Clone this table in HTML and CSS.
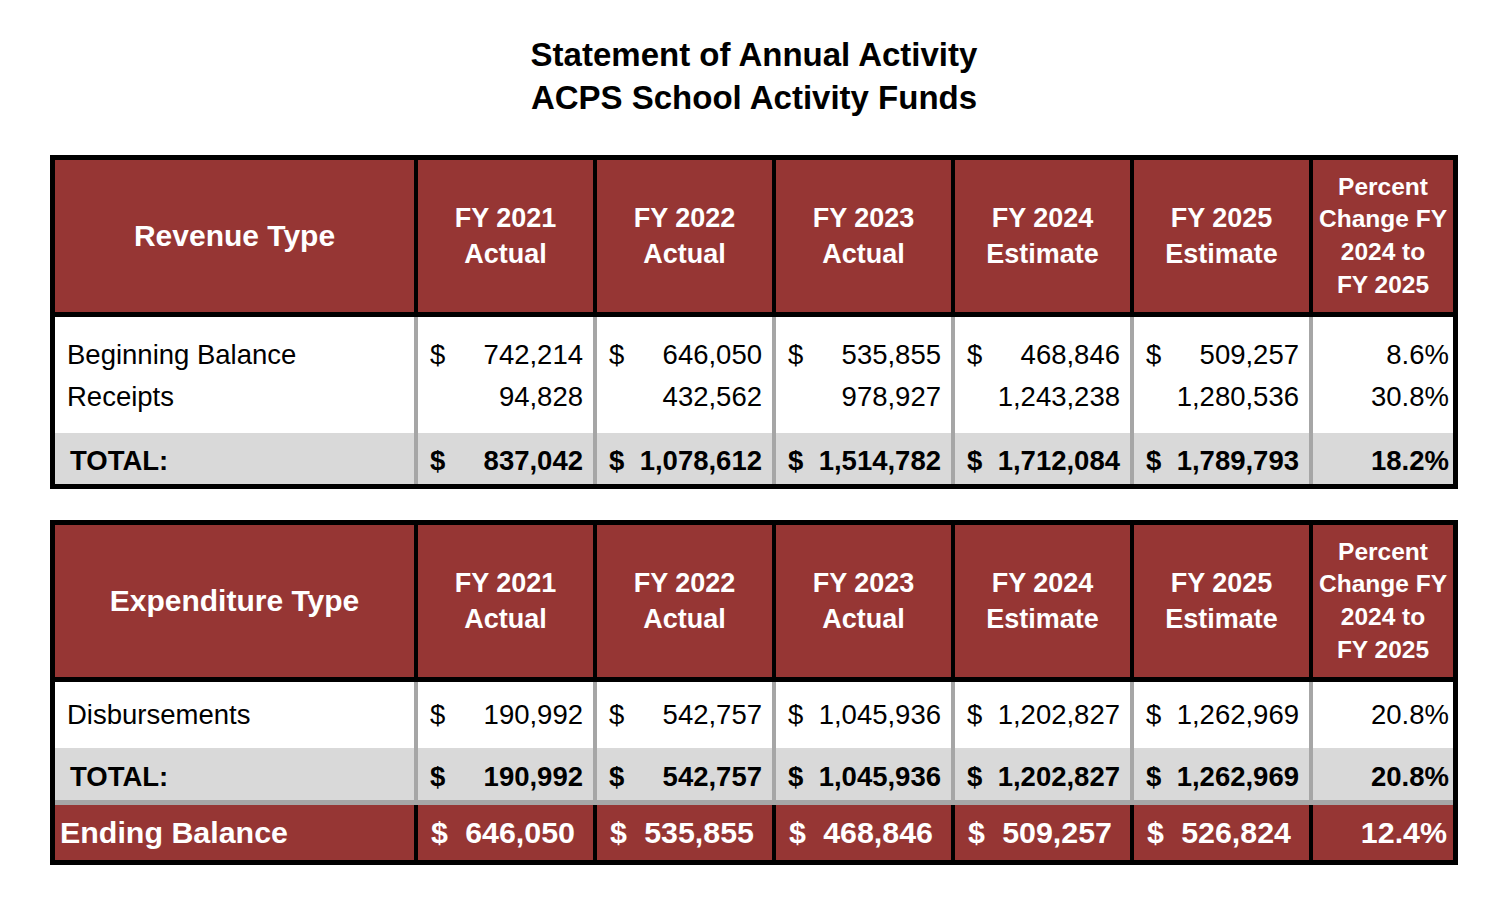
FILE: index.html
```html
<!DOCTYPE html>
<html lang="en">
<head>
<meta charset="utf-8">
<title>Statement of Annual Activity</title>
<link rel="stylesheet" href="styles.css">
</head>
<body>
<div class="page">
  <h1 class="title">Statement of Annual Activity<br>ACPS School Activity Funds</h1>

  <div class="tbl">
    <div class="grid head">
      <div class="h lbl-h">Revenue Type</div>
      <div class="h">FY 2021<br>Actual</div>
      <div class="h">FY 2022<br>Actual</div>
      <div class="h">FY 2023<br>Actual</div>
      <div class="h">FY 2024<br>Estimate</div>
      <div class="h">FY 2025<br>Estimate</div>
      <div class="h pct-h">Percent<br>Change FY<br>2024 to<br>FY 2025</div>
    </div>
    <div class="grid body">
      <div class="c lbl first">Beginning Balance</div>
      <div class="c amt first"><span>$</span><span>742,214</span></div>
      <div class="c amt first"><span>$</span><span>646,050</span></div>
      <div class="c amt first"><span>$</span><span>535,855</span></div>
      <div class="c amt first"><span>$</span><span>468,846</span></div>
      <div class="c amt first"><span>$</span><span>509,257</span></div>
      <div class="c pct first">8.6%</div>

      <div class="c lbl last">Receipts</div>
      <div class="c amt last"><span></span><span>94,828</span></div>
      <div class="c amt last"><span></span><span>432,562</span></div>
      <div class="c amt last"><span></span><span>978,927</span></div>
      <div class="c amt last"><span></span><span>1,243,238</span></div>
      <div class="c amt last"><span></span><span>1,280,536</span></div>
      <div class="c pct last">30.8%</div>

      <div class="c lbl tot tot-lbl">TOTAL:</div>
      <div class="c amt tot"><span>$</span><span>837,042</span></div>
      <div class="c amt tot"><span>$</span><span>1,078,612</span></div>
      <div class="c amt tot"><span>$</span><span>1,514,782</span></div>
      <div class="c amt tot"><span>$</span><span>1,712,084</span></div>
      <div class="c amt tot"><span>$</span><span>1,789,793</span></div>
      <div class="c pct tot">18.2%</div>
    </div>
  </div>

  <div class="tbl tbl2">
    <div class="grid head">
      <div class="h lbl-h">Expenditure Type</div>
      <div class="h">FY 2021<br>Actual</div>
      <div class="h">FY 2022<br>Actual</div>
      <div class="h">FY 2023<br>Actual</div>
      <div class="h">FY 2024<br>Estimate</div>
      <div class="h">FY 2025<br>Estimate</div>
      <div class="h pct-h">Percent<br>Change FY<br>2024 to<br>FY 2025</div>
    </div>
    <div class="grid body">
      <div class="c lbl single">Disbursements</div>
      <div class="c amt single"><span>$</span><span>190,992</span></div>
      <div class="c amt single"><span>$</span><span>542,757</span></div>
      <div class="c amt single"><span>$</span><span>1,045,936</span></div>
      <div class="c amt single"><span>$</span><span>1,202,827</span></div>
      <div class="c amt single"><span>$</span><span>1,262,969</span></div>
      <div class="c pct single">20.8%</div>

      <div class="c lbl tot tot-lbl tot2">TOTAL:</div>
      <div class="c amt tot tot2"><span>$</span><span>190,992</span></div>
      <div class="c amt tot tot2"><span>$</span><span>542,757</span></div>
      <div class="c amt tot tot2"><span>$</span><span>1,045,936</span></div>
      <div class="c amt tot tot2"><span>$</span><span>1,202,827</span></div>
      <div class="c amt tot tot2"><span>$</span><span>1,262,969</span></div>
      <div class="c pct tot tot2">20.8%</div>
    </div>
    <div class="grid ending">
      <div class="e lbl end-lbl">Ending Balance</div>
      <div class="e amt end-amt"><span>$</span><span>646,050</span></div>
      <div class="e amt end-amt"><span>$</span><span>535,855</span></div>
      <div class="e amt end-amt"><span>$</span><span>468,846</span></div>
      <div class="e amt end-amt"><span>$</span><span>509,257</span></div>
      <div class="e amt end-amt"><span>$</span><span>526,824</span></div>
      <div class="e pct end-pct">12.4%</div>
    </div>
  </div>
</div>
</body>
</html>
```

FILE: styles.css
```css
html, body {
  margin: 0;
  padding: 0;
  background: #ffffff;
}

body {
  font-family: "Liberation Sans", Arial, sans-serif;
  color: #000;
}

.page {
  width: 1408px;
  margin-left: 50px;
  padding-top: 33px;
}

.title {
  margin: 0 0 36px 0;
  font-size: 33px;
  line-height: 43px;
  font-weight: bold;
  text-align: center;
}

.tbl {
  border: 5px solid #000;
  width: 1398px;
}

.tbl2 {
  margin-top: 31px;
}

.grid {
  display: grid;
  grid-template-columns: 359px repeat(5, 175px) 140px;
  column-gap: 4px;
}

.head {
  background: #000;
  height: 152px;
  border-bottom: 5px solid #000;
}

.h {
  background: #963634;
  color: #fff;
  font-weight: bold;
  font-size: 27px;
  line-height: 36px;
  display: flex;
  align-items: center;
  justify-content: center;
  text-align: center;
}

.lbl-h {
  font-size: 30px;
}

.pct-h {
  font-size: 24.5px;
  line-height: 32.7px;
}

.body {
  background: #a6a6a6;
}

.c {
  background: #fff;
  font-size: 27.5px;
  line-height: 42px;
  display: flex;
  align-items: center;
}

.first {
  padding-top: 17px;
}

.last {
  padding-bottom: 15px;
}

.single {
  height: 66px;
}

.lbl {
  padding-left: 12px;
}

.amt {
  justify-content: space-between;
  padding: 0 10px 0 12px;
}

.amt.first {
  padding-top: 17px;
}

.amt.last {
  padding-bottom: 15px;
}

.pct {
  justify-content: flex-end;
  padding-right: 4px;
}

.pct.first {
  padding-top: 17px;
}

.pct.last {
  padding-bottom: 15px;
}

.tot {
  background: #d9d9d9;
  font-weight: bold;
  height: 51px;
  padding-top: 4px;
  box-sizing: border-box;
}

.tot2 {
  height: 52px;
  padding-top: 5px;
}

.tot-lbl {
  padding-left: 15px;
}

.ending {
  background: #000;
  border-top: 5px solid #a6a6a6;
}

.e {
  background: #963634;
  color: #fff;
  font-weight: bold;
  font-size: 30.4px;
  height: 55px;
  display: flex;
  align-items: center;
}

.end-lbl {
  padding-left: 5px;
}

.end-amt {
  padding: 0 18px 0 13px;
}

.end-pct {
  padding-right: 6px;
}
```
